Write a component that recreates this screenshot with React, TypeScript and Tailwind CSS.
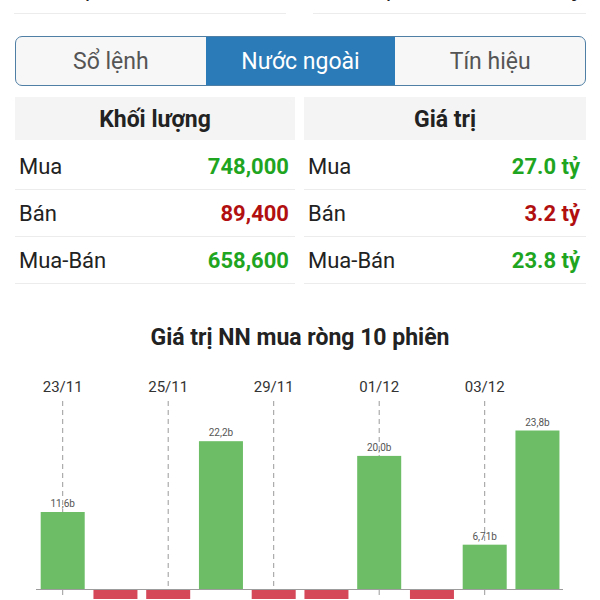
import React from "react";

const GREEN = "#6cbd65";
const RED = "#d5485a";

const bars: { v: number; label?: string }[] = [
  { v: 11.6, label: "11,6b" },
  { v: -3 },
  { v: -3 },
  { v: 22.2, label: "22,2b" },
  { v: -3 },
  { v: -3 },
  { v: 20.0, label: "20,0b" },
  { v: -3 },
  { v: 6.71, label: "6,71b" },
  { v: 23.8, label: "23,8b" },
];

const dates = ["23/11", "25/11", "29/11", "01/12", "03/12"];

function Chart() {
  const y0 = 230.5;
  const scale = 6.68;
  const x0 = 40.7;
  const pitch = 52.75;
  const w = 44;
  return (
    <svg width={600} height={240} viewBox="0 0 600 240" className="block">
      {dates.map((d, i) => {
        const cx = x0 + i * 2 * pitch + w / 2;
        return (
          <g key={d}>
            <text
              x={cx}
              y={32.5}
              textAnchor="middle"
              fontSize={15}
              fill="#333"
              fontFamily="Roboto, sans-serif"
            >
              {d}
            </text>
            <line
              x1={cx}
              x2={cx}
              y1={42}
              y2={240}
              stroke="#9a9a9a"
              strokeWidth={1}
              strokeDasharray="5 4"
            />
          </g>
        );
      })}
      {bars.map((b, i) => {
        const x = x0 + i * pitch;
        if (b.v >= 0) {
          const h = b.v * scale;
          return (
            <g key={i}>
              <rect x={x} y={y0 - h} width={w} height={h} fill={GREEN} />
              <text
                x={x + w / 2}
                y={y0 - h - 5}
                textAnchor="middle"
                fontSize={10}
                fill="#555"
                fontFamily="Roboto, sans-serif"
              >
                {b.label}
              </text>
            </g>
          );
        }
        return <rect key={i} x={x} y={y0 + 0.5} width={w} height={20} fill={RED} />;
      })}
      <line x1={36} x2={563} y1={y0} y2={y0} stroke="#9c9c9c" strokeWidth={1} />
    </svg>
  );
}

function Table({
  title,
  rows,
}: {
  title: string;
  rows: { label: string; value: string; color: string }[];
}) {
  return (
    <div className="flex flex-col">
      <div className="h-[43px] pt-[3px] bg-[#f4f4f4] flex items-center justify-center text-[23px] font-bold text-[#222]">
        {title}
      </div>
      <div className="mt-[3px] flex flex-col">
        {rows.map((r) => (
          <div
            key={r.label}
            className="h-[47px] border-b border-[#ececec] flex items-center justify-between pl-[4px] pr-[6px] text-[22px]"
          >
            <span className="text-[#222]">{r.label}</span>
            <span className="font-bold" style={{ color: r.color }}>
              {r.value}
            </span>
          </div>
        ))}
      </div>
    </div>
  );
}

export default function App() {
  const g = "#1fa51f";
  const r = "#b10f10";
  return (
    <div className="w-[600px] h-[600px] overflow-hidden bg-white font-[Roboto,sans-serif]">
      {/* clipped row at top */}
      <div className="-mt-[36px] grid grid-cols-[272px_273px] gap-[27px] pl-[14px]">
        <div className="h-[50px] border-b border-[#ececec] flex items-center justify-between px-[4px] text-[22px] text-[#222]">
          <span>KL khớp</span>
          <span className="font-bold">25,400</span>
        </div>
        <div className="h-[50px] border-b border-[#ececec] flex items-center justify-between px-[4px] text-[22px] text-[#222]">
          <span>GT khớp</span>
          <span className="font-bold">64.2 tỷ</span>
        </div>
      </div>

      {/* tabs */}
      <div className="mt-[22px] ml-[15px] w-[571px] h-[50px] rounded-[7px] border-[1.5px] border-[#4f7fa5] overflow-hidden grid grid-cols-3 bg-[#f7f7f7] text-[23px]">
        <div className="pt-[3px] flex items-center justify-center text-[#555]">Sổ lệnh</div>
        <div className="pt-[3px] flex items-center justify-center bg-[#2a7bb8] text-white">Nước ngoài</div>
        <div className="pt-[3px] flex items-center justify-center text-[#555]">Tín hiệu</div>
      </div>

      {/* tables */}
      <div className="mt-[11px] ml-[15px] w-[571px] grid grid-cols-[280px_282px] gap-[9px]">
        <Table
          title="Khối lượng"
          rows={[
            { label: "Mua", value: "748,000", color: g },
            { label: "Bán", value: "89,400", color: r },
            { label: "Mua-Bán", value: "658,600", color: g },
          ]}
        />
        <Table
          title="Giá trị"
          rows={[
            { label: "Mua", value: "27.0 tỷ", color: g },
            { label: "Bán", value: "3.2 tỷ", color: r },
            { label: "Mua-Bán", value: "23.8 tỷ", color: g },
          ]}
        />
      </div>

      {/* chart title */}
      <div className="mt-[42px] h-[24px] flex items-center justify-center text-[23px] font-bold text-[#222]">
        Giá trị NN mua ròng 10 phiên
      </div>

      <div className="mt-[9px]">
        <Chart />
      </div>
    </div>
  );
}
